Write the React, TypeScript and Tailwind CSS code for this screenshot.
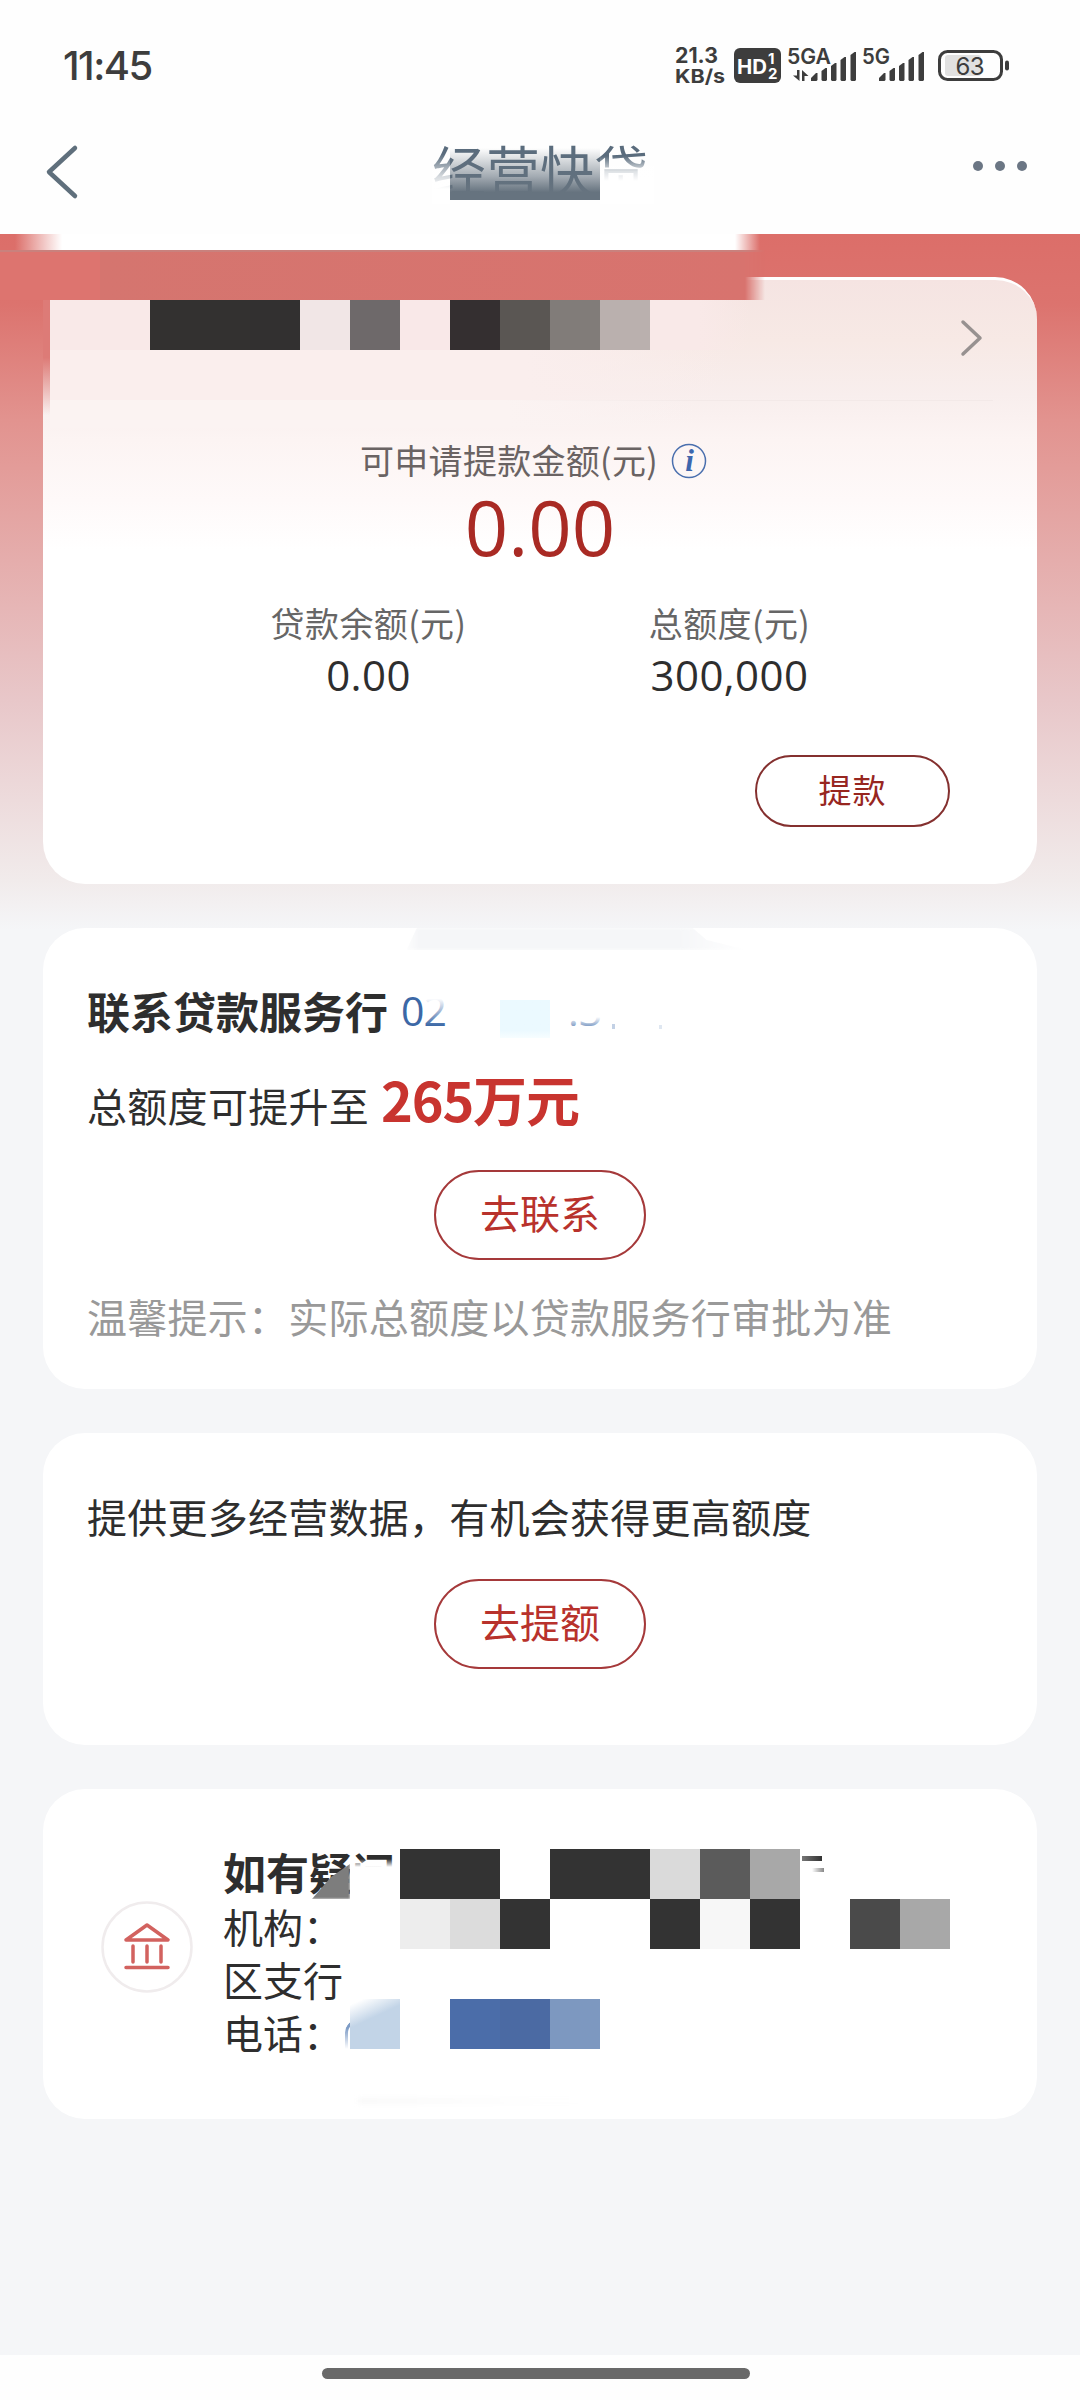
import type { ReactNode } from "react";

const font = "font-['Noto_Sans_CJK_SC',sans-serif]";

const nameMosaic = [
	"bg-[#f9e9e8]",
	"bg-[#f9e9e8]",
	"bg-[#333130]",
	"bg-[#333130]",
	"bg-[#323030]",
	"bg-[#f1e6e6]",
	"bg-[#6e696a]",
	"bg-[#f9e8e8]",
	"bg-[#342f30]",
	"bg-[#5a5653]",
	"bg-[#817c79]",
	"bg-[#bab0ae]",
	"bg-[#f9e9e8]",
	"bg-linear-to-r from-[#f9e9e8] to-transparent",
];

const branchMosaic = [
	"bg-[#333]",
	"bg-[#333]",
	"bg-transparent",
	"bg-[#333]",
	"bg-[#333]",
	"bg-[#dadada]",
	"bg-[#5b5b5b]",
	"bg-[#a8a8a8]",
	"bg-transparent",
	"bg-transparent",
	"bg-transparent",
	"bg-[#ededed]",
	"bg-[#dcdcdc]",
	"bg-[#333]",
	"bg-transparent",
	"bg-transparent",
	"bg-[#333]",
	"bg-[#f7f7f7]",
	"bg-[#333]",
	"bg-transparent",
	"bg-[#4a4a4a]",
	"bg-[#a8a8a8]",
];

function Signal({ x }: { x: number }) {
	return (
		<g transform={`translate(${x} 0)`} fill="#3d3d3d">
			<path d="M0 81v-3l5-5h1.500v7l-1 1z" />
			<path d="M10.500 80v-9l4-3h1.500v12l-1 1h-3.500z" />
			<path d="M20 80V66l4-3h1.500v17l-1 1H21z" />
			<path d="M29.500 80V60l4-3H35v23l-1 1h-3.500z" />
			<path d="M39.500 80V55l4-3H45v28l-1 1h-3.500z" />
		</g>
	);
}

function StatusBar() {
	return (
		<div className="flex items-start justify-between h-[108px] pl-[63px] pr-[70px] text-[#3d3d3d]">
			<p className="mt-[41px] font-['Inter',sans-serif] text-[40px] leading-[50px] font-medium tracking-[-1.5px]">
				11:45
			</p>
			<svg
				width="340"
				height="108"
				viewBox="670 0 340 108"
				fontFamily="Inter, sans-serif"
				fontWeight="600"
				fill="#3d3d3d"
			>
				<text
					x="675"
					y="63"
					fontSize="21"
					fontWeight="700"
					textLength="43"
					lengthAdjust="spacingAndGlyphs"
				>
					21.3
				</text>
				<text
					x="675"
					y="83"
					fontSize="19"
					fontWeight="700"
					textLength="50"
					lengthAdjust="spacingAndGlyphs"
				>
					KB/s
				</text>
				<rect x="734" y="48" width="47" height="35" rx="6" />
				<text
					x="737"
					y="73.500"
					fontSize="20"
					fontWeight="700"
					fill="#fff"
					textLength="30"
					lengthAdjust="spacingAndGlyphs"
				>
					HD
				</text>
				<text x="768" y="64" fontSize="15" fontWeight="700" fill="#fff">
					1
				</text>
				<text x="768" y="79" fontSize="15" fontWeight="700" fill="#fff">
					2
				</text>
				<text x="787" y="64" fontSize="21" textLength="44" lengthAdjust="spacingAndGlyphs">
					5GA
				</text>
				<path d="M797 70h2.500v11L793 75.500h4zM802 81h2.500v-5h4L802 70z" />
				<Signal x={811} />
				<text x="862" y="64" fontSize="21" textLength="28" lengthAdjust="spacingAndGlyphs">
					5G
				</text>
				<Signal x={879} />
				<rect x="945" y="55" width="36" height="21" rx="3" fill="#e1e1e1" />
				<rect
					x="939.500"
					y="51.500"
					width="62"
					height="28"
					rx="8"
					fill="none"
					stroke="#3d3d3d"
					strokeWidth="3"
				/>
				<rect x="1005" y="60.500" width="4" height="10" rx="2" />
				<text x="955.500" y="74.500" fontSize="24" fontWeight="400" textLength="29">
					63
				</text>
			</svg>
		</div>
	);
}

function NavBar() {
	return (
		<div className="relative flex justify-between h-[126px] pl-[45px] pr-[53px]">
			<svg className="mt-[36px]" width="34" height="56" viewBox="0 0 34 56" fill="none">
				<path
					d="M30 4 4 28l26 24"
					stroke="#5f6f7c"
					strokeWidth="4.500"
					strokeLinecap="round"
					strokeLinejoin="round"
				/>
			</svg>
			<div className="absolute left-[432px] top-[26px]">
				<h1 className="pt-[2px] text-[54px] leading-[66px] text-[#5a6c7d]">经营快贷</h1>
				{/* smudge around the title */}
				<div className="absolute left-0 top-0 w-[218px] h-[11px] bg-[#fefefe]" />
				<div className="absolute left-0 top-[20px] w-[18px] h-[50px] bg-linear-to-b from-transparent via-white/75 via-45% to-white to-70%" />
				<div className="absolute left-[18px] top-[14px] w-[150px] h-[52px] bg-linear-to-b from-transparent via-[#66737f]/60 via-55% to-[#66737f] to-85%" />
				<div className="absolute left-[168px] top-[22px] w-[54px] h-[48px] bg-linear-to-b from-transparent via-white/80 via-32% to-white to-52%" />
			</div>
			<div className="flex gap-[12px] mt-[53px]">
				<span className="w-[10px] h-[10px] rounded-full bg-[#6b7684]" />
				<span className="w-[10px] h-[10px] rounded-full bg-[#6b7684]" />
				<span className="w-[10px] h-[10px] rounded-full bg-[#6b7684]" />
			</div>
		</div>
	);
}

function Card({ className, children }: { className: string; children: ReactNode }) {
	return <section className={`rounded-[42px] ${className}`}>{children}</section>;
}

function OutlineButton({ children }: { children: ReactNode }) {
	return (
		<button className="block mx-auto w-[212px] h-[90px] pb-[6px] rounded-full border-2 border-[#a5393a] text-[40px] leading-none text-[#b8322c]">
			{children}
		</button>
	);
}

function Amount({ label, value }: { label: string; value: string }) {
	return (
		<div className="flex flex-col items-center w-[361px]">
			<p className="text-[34px] leading-[50px] tracking-[0.4px] text-[#666]">{label}</p>
			<p className="mt-[2px] font-['Open_Sans',sans-serif] text-[42px] leading-[50px] tracking-[0.4px] text-[#2e2e2e]">
				{value}
			</p>
		</div>
	);
}

function QuotaCard() {
	return (
		<Card className="h-[607px] border-t-[3px] border-white bg-linear-[180deg,#f5e4e2_0px,#f7e9e5_60px,#f8eeed_115px,#fcf4f3_160px,#fef9f9_220px,#fff_270px]">
			<div className="flex justify-end h-[121px] mx-[44px] border-b border-[#f3e9e8]">
				<svg className="mt-[38px] mr-[9px]" width="24" height="40" viewBox="0 0 24 40" fill="none">
					<path
						d="M3 4l17 16L3 36"
						stroke="#979190"
						strokeWidth="3.500"
						strokeLinecap="round"
						strokeLinejoin="round"
					/>
				</svg>
			</div>
			<div className="flex items-center mt-[34px] pl-[317px]">
				<p className="text-[34px] leading-[50px] tracking-[0.3px] text-[#6a6363]">
					可申请提款金额(元)
				</p>
				<svg className="mt-[2px] ml-[13px]" width="36" height="36" viewBox="0 0 36 36">
					<circle cx="18" cy="18" r="16.500" fill="none" stroke="#4a6fae" strokeWidth="1.500" />
					<text
						x="18.500"
						y="28"
						fontFamily="Liberation Serif, serif"
						fontSize="31"
						fontStyle="italic"
						fontWeight="700"
						fill="#3d66ad"
						textAnchor="middle"
					>
						i
					</text>
				</svg>
			</div>
			<p className="mt-[2px] text-center font-['Open_Sans',sans-serif] text-[76px] leading-[80px] text-[#a92a24]">
				0.00
			</p>
			<div className="flex mt-[31px] pl-[145px]">
				<Amount label="贷款余额(元)" value="0.00" />
				<Amount label="总额度(元)" value="300,000" />
			</div>
			<button className="block mt-[55px] ml-auto mr-[87px] w-[195px] h-[72px] pb-[3px] rounded-full border-2 border-[#84302f] text-[33px] leading-none tracking-[1px] text-[#97261f]">
				提款
			</button>
		</Card>
	);
}

function ContactCard() {
	return (
		<Card className="relative h-[461px] bg-white pt-[52px] px-[44px]">
			<div className="absolute left-[360px] top-0 w-[345px] h-[22px] bg-[#f5f6f8] blur-[1.5px] [clip-path:polygon(4%_0,84%_0,88%_55%,100%_100%,1%_100%)] [mask-image:linear-gradient(90deg,transparent,#000_16px,#000_275px,transparent_345px)]" />
			<h2 className="flex text-[43px] leading-[60px] font-bold text-[#2e2e2e]">
				联系贷款服务行
				<span className="relative ml-[13px] font-['Open_Sans',sans-serif] text-[41px] font-normal tracking-[-1px] text-[#3c68a6]">
					02
					<span className="absolute left-[23px] top-[8px] w-[30px] h-[42px] bg-linear-to-b from-white from-25% to-transparent to-90%" />
				</span>
				<span className="w-[50px] h-[38px] mt-[20px] ml-[54px] bg-linear-to-b from-[#ebf9ff] from-80% to-[#f7fdff]" />
				<span className="relative ml-[18px] font-['Open_Sans',sans-serif] text-[41px] font-normal text-[#3c68a6]">
					.3
					<span className="absolute inset-x-0 top-0 h-[50px] bg-linear-to-b from-white from-74% to-white/10" />
				</span>
				<span className="w-[3px] h-[5px] mt-[44px] ml-[10px] bg-[#c3d1e5]" />
				<span className="w-[3px] h-[4px] mt-[45px] ml-[44px] bg-[#dfe7f1]" />
			</h2>
			<p className="flex items-baseline mt-[29px] text-[40px] leading-[60px] tracking-[0.3px] text-[#2e2e2e]">
				总额度可提升至
				<strong className="ml-[12px] text-[54px] font-bold tracking-[-1.2px] text-[#c8342f]">
					265万元
				</strong>
			</p>
			<div className="mt-[35px]">
				<OutlineButton>去联系</OutlineButton>
			</div>
			<p className="mt-[26px] text-[40px] leading-[60px] tracking-[0.25px] text-[#999]">
				温馨提示：实际总额度以贷款服务行审批为准
			</p>
		</Card>
	);
}

function BankIcon() {
	return (
		<svg width="92" height="92" viewBox="0 0 92 92" fill="none">
			<circle cx="46" cy="46" r="44.500" stroke="#f0eced" strokeWidth="2.500" />
			<g stroke="#d2625f" strokeWidth="3.500" strokeLinecap="round" strokeLinejoin="round">
				<path d="M25 39 46 24l21 15z" />
				<path d="M32 45v16M46 45v16M60 45v16M25 66.500h42" />
			</g>
		</svg>
	);
}

function SupportCard() {
	return (
		<Card className="relative flex h-[330px] bg-white pt-[54px] pl-[58px]">
			<div className="mt-[58px]">
				<BankIcon />
			</div>
			<div className="ml-[30px] text-[40px] leading-[53px] text-[#2e2e2e]">
				<h2 className="mb-[1px] text-[43px] leading-[56px] font-bold">如有疑问</h2>
				<p>机构：</p>
				<p>区支行</p>
				<p>电话：</p>
			</div>
			<div className="absolute left-[257px] top-[60px] w-[50px] h-[50px] bg-[#7d7d7d] blur-[1px] [clip-path:polygon(100%_30%,100%_100%,24%_100%,62%_56%)]" />
			<div className="absolute left-[307px] top-[60px] w-[50px] h-[50px] bg-linear-to-b from-transparent from-20% to-white to-36%" />
			<div className="absolute left-[357px] top-[60px] grid grid-cols-[repeat(11,50px)] auto-rows-[50px]">
				{branchMosaic.map((c, i) => (
					<span key={i} className={c} />
				))}
			</div>
			<div className="absolute left-[759px] top-[67px] w-[20px] h-[5px] bg-linear-to-r from-[#777] to-[#333]" />
			<div className="absolute left-[769px] top-[79px] w-[12px] h-[4px] bg-linear-to-r from-white to-[#888]" />
			<div className="absolute left-[302px] top-[230px] w-[14px] h-[30px] rounded-tl-[14px] border-l-[3px] border-t-[3px] border-[#7e9cc6] [mask-image:linear-gradient(#000_30%,transparent)]" />
			<div className="absolute left-[307px] top-[210px] flex h-[50px]">
				<span className="w-[50px] bg-linear-[155deg,#fff_8%,#c2d4e7_40%]" />
				<span className="w-[50px]" />
				<span className="w-[50px] bg-[#4b6da9]" />
				<span className="w-[50px] bg-[#4b6aa3]" />
				<span className="w-[50px] bg-[#7d98c0]" />
			</div>
			<div className="absolute left-[315px] top-[309px] w-[230px] h-[6px] bg-linear-to-r from-[#f9f9f9] to-white blur-[2px]" />
		</Card>
	);
}

export default function App() {
	return (
		<div className={`flex flex-col w-[1080px] h-[2400px] overflow-hidden bg-[#f5f6f8] ${font}`}>
			<header className="bg-[#fefefe]">
				<StatusBar />
				<NavBar />
			</header>
			<main className="relative flex flex-col flex-1 gap-[44px] px-[43px] pt-[43px] bg-linear-[180deg,#dc6e69_0px,#dc736e_70px,#e2938f_186px,#e8c7c9_466px,#f1ebeb_646px,#f5f6f8_696px]">
				<QuotaCard />
				<ContactCard />
				<Card className="h-[312px] bg-white pt-[53px] px-[44px]">
					<p className="text-[40px] leading-[60px] tracking-[0.25px] text-[#2e2e2e]">
						提供更多经营数据，有机会获得更高额度
					</p>
					<div className="mt-[33px]">
						<OutlineButton>去提额</OutlineButton>
					</div>
				</Card>
				<SupportCard />

				{/* redacted account name */}
				<div className="absolute left-0 top-0 w-[780px] h-[16px] bg-linear-[90deg,transparent_15px,#fff_62px,#fff_735px,transparent_760px]" />
				<div className="absolute left-[43px] top-[66px] w-[7px] h-[115px] bg-linear-to-b from-[#dd7b77] from-50% to-transparent" />
				<div className="absolute left-0 top-[16px] w-[775px] h-[50px] border-t-2 border-[#c9817d] bg-linear-[90deg,#dd746f_100px,#d5756f_100px,#d8736e_750px] [mask-image:linear-gradient(90deg,#000_745px,transparent_765px)]" />
				<div className="absolute left-[50px] top-[66px] flex h-[50px]">
					{nameMosaic.map((c, i) => (
						<span key={i} className={`w-[50px] ${c}`} />
					))}
				</div>
				<div className="absolute left-[50px] top-[116px] w-[680px] h-[50px] bg-linear-[90deg,#faeeed_70%,transparent]" />
				<div className="absolute left-[50px] top-[166px] w-[650px] h-[28px] bg-linear-[90deg,#fbf3f2_70%,transparent]" />
			</main>
			<footer className="flex justify-center h-[45px] pt-[13px] pr-[8px] bg-[#fefefe]">
				<div className="w-[428px] h-[11px] rounded-full bg-[#696969]" />
			</footer>
		</div>
	);
}
